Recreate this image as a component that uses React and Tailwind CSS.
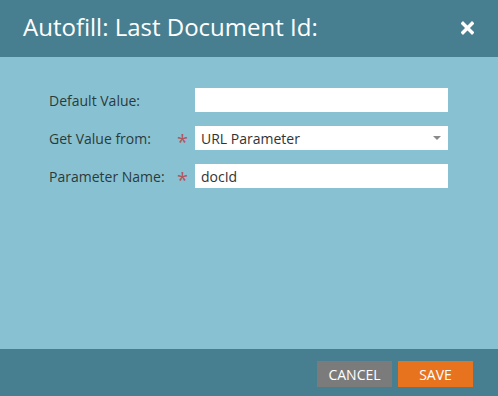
import React from 'react';

const Field = ({ label, required, children }) => (
    <div className="flex items-center h-6">
        <label className="w-[128px] shrink-0 text-[14px] text-[#2d3a3a]">{label}</label>
        <span className="w-[18px] shrink-0 text-[20px] leading-none text-[#b3555b] pt-[7px]">{required ? '*' : ''}</span>
        <div className="w-[253px] h-6 bg-white relative flex items-center px-[6px] text-[14px] text-[#333]">
            {children}
        </div>
    </div>
);

const App = () => {
    return (
        <div className="w-[498px] h-[396px] flex flex-col bg-[#88c2d2]" style={{ fontFamily: '"Open Sans", sans-serif' }}>
            <header className="h-[57px] shrink-0 bg-[#477f91] flex items-center justify-between pl-[23px] pr-[24px]">
                <h1 className="text-[24px] text-white pb-[3px]">Autofill: Last Document Id:</h1>
                <svg width="13" height="14" viewBox="0 0 13 14" className="mb-[2px]">
                    <path d="M2 2.5 L11 11.5 M11 2.5 L2 11.5" stroke="white" strokeWidth="3.4" strokeLinecap="square" />
                </svg>
            </header>

            <main className="flex-1 pt-[31px] pl-[49px] flex flex-col gap-[14px]">
                <Field label="Default Value:"></Field>
                <Field label="Get Value from:" required>
                    <span>URL Parameter</span>
                    <span className="absolute right-[7px] top-[10px] w-0 h-0 border-l-[4px] border-r-[4px] border-t-[4px] border-l-transparent border-r-transparent border-t-[#8a8a8a]" />
                </Field>
                <Field label="Parameter Name:" required>
                    <span>docId</span>
                </Field>
            </main>

            <footer className="h-[47px] shrink-0 bg-[#477f91] flex items-start justify-end gap-[6px] pt-[12px] pr-[25px]">
                <button className="w-[75px] h-[26px] bg-[#7b7b7b] text-white text-[14px]">CANCEL</button>
                <button className="w-[75px] h-[26px] bg-[#e8731f] text-white text-[14px]">SAVE</button>
            </footer>
        </div>
    );
};

export default App;
